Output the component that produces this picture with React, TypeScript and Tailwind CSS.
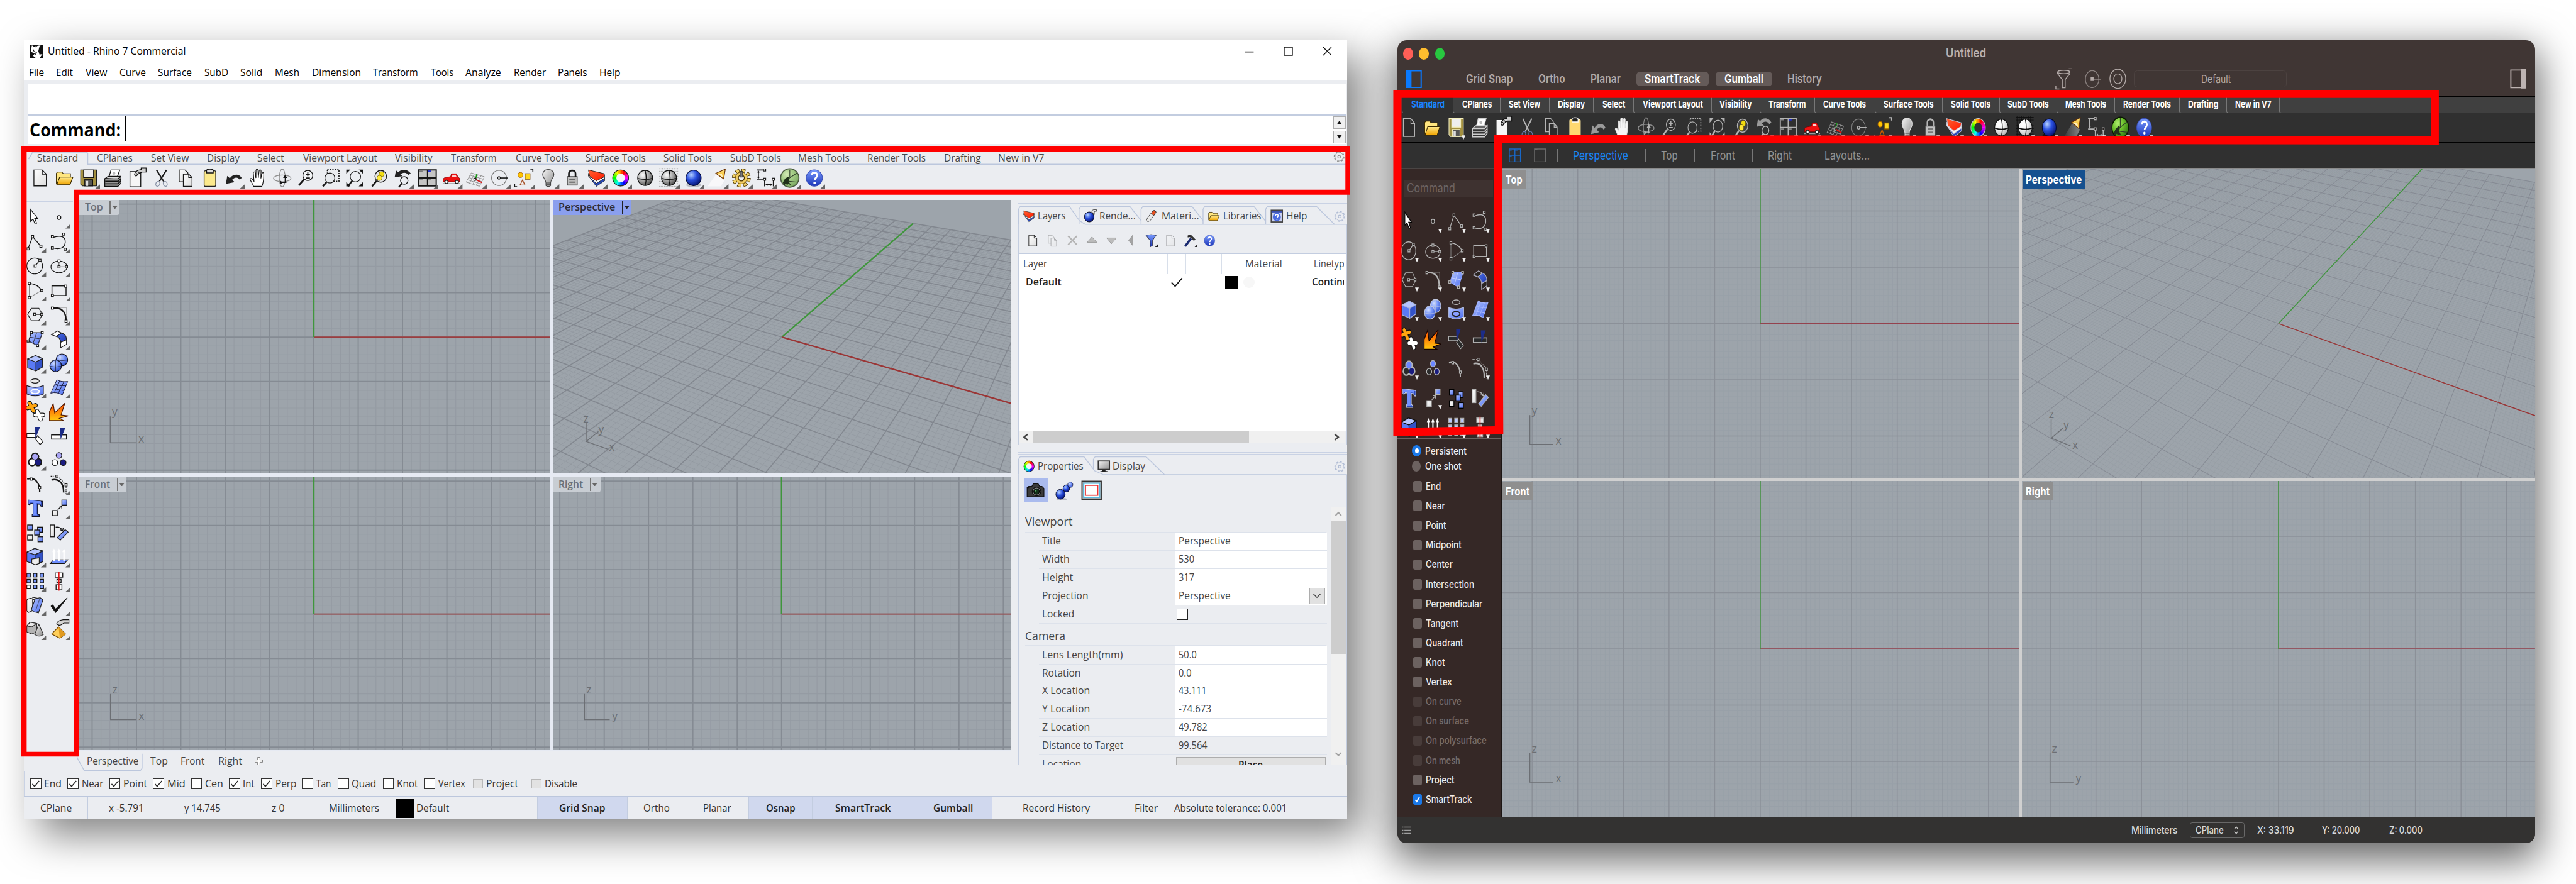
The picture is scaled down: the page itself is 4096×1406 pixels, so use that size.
import React, { useLayoutEffect, useRef, useState } from "react";

/* ---------- text that occupies an exact width ---------- */
function Fit({ w, children, className = "" }: { w: number; children: React.ReactNode; className?: string }) {
  const outer = useRef<HTMLSpanElement>(null);
  const inner = useRef<HTMLSpanElement>(null);
  const [s, setS] = useState(1);
  useLayoutEffect(() => {
    if (outer.current && inner.current) {
      setS(outer.current.getBoundingClientRect().width / inner.current.getBoundingClientRect().width);
    }
  }, []);
  return (
    <span ref={outer} className={"inline-block shrink-0 whitespace-nowrap text-left " + className} style={{ width: w }}>
      <span ref={inner} className="inline-block origin-left" style={{ transform: `scaleX(${s})` }}>
        {children}
      </span>
    </span>
  );
}

/* ---------- shared gradients ---------- */
function Defs() {
  const lin = (id: string, a: string, b: string, x2 = "1", y2 = "1") => (
    <linearGradient id={id} x1="0" y1="0" x2={x2} y2={y2}>
      <stop offset="0" stopColor={a} />
      <stop offset="1" stopColor={b} />
    </linearGradient>
  );
  const rad = (id: string, a: string, m: string, b: string) => (
    <radialGradient id={id} cx=".35" cy=".3" r=".75">
      <stop offset="0" stopColor={a} />
      <stop offset=".45" stopColor={m} />
      <stop offset="1" stopColor={b} />
    </radialGradient>
  );
  return (
    <svg width="0" height="0" className="absolute">
      <defs>
        {lin("gPaper", "#ffffff", "#dcdcdc")}
        {lin("gBlue", "#b4c6ff", "#4a6cf0")}
        {lin("gBlueD", "#4a6ee6", "#2038b0")}
        {lin("gGold", "#ffe98a", "#f0a400", "0")}
        {lin("gOrange", "#ff4a00", "#ffc810", "0")}
        {lin("gRed", "#ff6030", "#ff1800")}
        {lin("gGray", "#f4f4f4", "#8c8c8c")}
        {lin("gHelp", "#7a9cff", "#1a34b8", "0")}
        {lin("gBeam", "#3a3a3a", "#9a9a9a", "1", "0")}
        {rad("gBall", "#b8d4ff", "#2a50e0", "#04106a")}
        {rad("gSphere", "#ffffff", "#b8b8b8", "#4a4a4a")}
        {rad("gSphereW", "#ffffff", "#f2f2f2", "#b0b0b0")}
        {rad("gBlob", "#cfdcff", "#7a98fa", "#2f50c8")}
        {rad("gGreen", "#d6ecb8", "#a4cc86", "#7aa860")}
        {rad("gGreenD", "#b0f070", "#6cc02c", "#2f7a10")}
      </defs>
    </svg>
  );
}

/* ---------- icons, on a 24 unit grid ---------- */
type T = { k: string; p: string; d: boolean };
const LIGHT: T = { k: "#161616", p: "url(#gPaper)", d: false };
const DARK: T = { k: "#b4b4b4", p: "#2c2c2c", d: true };

const H = (x: number, y: number, t: T) => (
  <rect key={x + "-" + y} x={x - 1.3} y={y - 1.3} width="2.6" height="2.6" fill={t.d ? "#2a2422" : "#fff"} stroke={t.k} strokeWidth=".9" />
);
const wheel = (r: number, sw: number) =>
  Array.from({ length: 24 }, (_, i) => {
    const a = ((i * 15 - 98) * Math.PI) / 180;
    const b = (((i + 1) * 15 - 96) * Math.PI) / 180;
    return (
      <path
        key={i}
        d={`M${12 + r * Math.cos(a)} ${12 + r * Math.sin(a)}A${r} ${r} 0 0 1 ${12 + r * Math.cos(b)} ${12 + r * Math.sin(b)}`}
        stroke={`hsl(${360 - ((i * 15 + 330) % 360)} 100% 50%)`}
        strokeWidth={sw}
        fill="none"
      />
    );
  });
const box = (x: number, y: number, s: number, f: string, k: string) => (
  <rect key={x + "_" + y} x={x} y={y} width={s} height={s} fill={f} stroke={k} strokeWidth="1" />
);
const lens = (t: T) => (
  <>
    <circle cx="14" cy="9" r="6" fill={t.d ? "none" : "#f4f6f8"} stroke={t.k} />
    <path d="M9.6 13.6 3 21" stroke={t.k} strokeWidth="2" />
  </>
);

const ICONS: Record<string, (t: T) => React.ReactNode> = {
  page: (t) => <path d="M4.5 2.5h10l5 5v14h-15zM14.5 2.5v5h5" fill={t.p} stroke={t.k} />,
  open: () => (
    <g stroke="#3a2a00" strokeWidth=".9">
      <path d="M2 19V6.500l1.500-1.500h5l2 2h8.500v4" fill="#ffe680" />
      <path d="M2.500 20 6 11h16l-3.500 9z" fill="url(#gGold)" />
    </g>
  ),
  save: (t) => (
    <g stroke={t.d ? "#f4f0c0" : "#111"} strokeWidth=".9">
      <path d="M2.500 2.500h19v19H4.500l-2-2z" fill="#a39040" />
      <rect x="6" y="2.500" width="12" height="9" fill="#eeeeee" />
      <rect x="7" y="14" width="10" height="7.500" fill="#555" />
      <rect x="8.500" y="15.500" width="3" height="6" fill="#ddd" stroke="none" />
    </g>
  ),
  print: (t) => (
    <g stroke={t.d ? "#cfcfcf" : "#111"} strokeWidth="1">
      <path d="M7 11 9.500 2.500H20L17 11z" fill="#fff" />
      <circle cx="13" cy="6.500" r="1.800" fill="#bbb" stroke="none" />
      <path d="M2.500 12.500 6 10h15l-3 3.500z" fill={t.d ? "#666" : "#ddd"} />
      <path d="M2 13h16l3.500-3v8L18 22H2z" fill={t.d ? "#333" : "#999"} />
      <path d="M2.500 16H18l3.500-3M2.500 19H18l3.500-3.500" strokeWidth="1.300" fill="none" />
    </g>
  ),
  props: (t) => (
    <>
      <path d="M3.500 4.500h13v18h-13z" fill="#f6f6f6" stroke={t.d ? "#fff" : "#111"} />
      <path d="M9 7.500c1-3 4-5 8-5.500V0h6v5h-5c-2 1-5 1.500-6 4-1 1-3 1-3-1.500z" fill="#cfcfcf" stroke="#111" strokeWidth=".9" />
      <path d="M11 6l1.500 2M13.500 4.500 15 6.500" stroke="#111" strokeWidth=".8" />
    </>
  ),
  cut: (t) => (
    <>
      <path d="M6 2.500 14.500 16M18 2.500 9.500 16" stroke={t.k} strokeWidth="1.600" />
      <ellipse cx="7.500" cy="19" rx="2.300" ry="3" fill="none" stroke={t.d ? "#6878a8" : "#8a94a8"} transform="rotate(25 7.500 19)" />
      <ellipse cx="16.500" cy="19" rx="2.300" ry="3" fill="none" stroke={t.d ? "#6878a8" : "#8a94a8"} transform="rotate(-25 16.500 19)" />
    </>
  ),
  copy: (t) => (
    <g fill={t.p} stroke={t.k}>
      <path d="M4.500 2.500h7l3.500 3.500v10.500H4.500z" />
      <path d="M9.500 7.500h6.500l4 4v10.500H9.500zM16 7.500v4h4" />
    </g>
  ),
  paste: (t) => (
    <>
      <rect x="5" y="3.500" width="14" height="18.500" rx="1.500" fill={t.d ? "#ffd870" : "#fbe98c"} stroke={t.d ? "#ffe9a0" : "#222"} />
      <path d="M8 3c0-2 8-2 8 0v3H8z" fill={t.d ? "#222" : "#ddd"} stroke={t.d ? "#fff" : "#111"} strokeWidth="1" />
    </>
  ),
  undo: (t) => (
    <path d="M2.500 19 4 9.500l3.200 2.800C10.500 7.500 18 6 21.500 12l-2.500 2c-2.500-3.500-6.500-2.800-9 .3l3 2.700z" fill={t.d ? "#9a9a9a" : "#222"} />
  ),
  hand: (t) => (
    <path
      d="M7 22C6 19 3.500 16 2.800 13.500c.4-1.400 1.800-1.200 2.700.2L7.500 16 6.700 6c.1-1.600 2-1.600 2.300 0l.8 6L9.900 3c.2-1.700 2.200-1.700 2.400 0l.4 9L13.700 3.500c.3-1.600 2.200-1.500 2.300.1l-.2 8.900 1.400-6c.5-1.400 2.200-1 2.100.5C19.300 13 19 18 17 22z"
      fill={t.d ? "#f6f6f6" : "#fff"}
      stroke={t.d ? "#e0e0e0" : "#111"}
      strokeWidth=".9"
    />
  ),
  orbit: (t) => (
    <g fill="none" stroke="#8c8c8c">
      <ellipse cx="12" cy="12.500" rx="10.500" ry="4" />
      <ellipse cx="12" cy="12" rx="3.600" ry="10.500" />
      <path d="M12.500 17.500 9.500 15v5zM15.500 8l-2.500 4h5z" fill={t.k} stroke="none" />
      <path d="M15.500 11v6M11 17.500h6" stroke={t.k} />
    </g>
  ),
  zoomPm: (t) => (
    <>
      {lens(t)}
      <path d="M14 5v5M11.500 7.500h5M11.500 12h5" stroke={t.k} strokeWidth="1.300" />
    </>
  ),
  zoomWin: (t) => (
    <>
      <rect x="8" y="2" width="14" height="14" fill="none" stroke={t.k} strokeDasharray="1.500 1.500" strokeWidth="1.300" />
      <circle cx="11" cy="12" r="6" fill={t.d ? "#303030" : "#e6e9ed"} stroke={t.k} strokeWidth=".9" />
      <path d="M7 17 2.500 22" stroke={t.k} strokeWidth="2" />
    </>
  ),
  zoomExt: (t) => (
    <>
      <path d="M2 2h5L2 7zM22 2v5l-5-5zM2 22v-5l5 5zM22 22h-5l5-5z" fill={t.k} />
      <circle cx="13" cy="10.500" r="6.300" fill="none" stroke={t.k} strokeWidth=".9" />
      <path d="M9 15.500 4 22" stroke={t.k} strokeWidth="2" />
    </>
  ),
  zoomSel: (t) => (
    <>
      <circle cx="14" cy="10" r="7" fill={t.d ? "#444" : "#e6e6e6"} stroke={t.k} />
      <circle cx="15" cy="7.500" r="3" fill="#f2dc10" stroke="#6a5a00" strokeWidth=".6" />
      <circle cx="12.500" cy="12" r="3" fill="#ffe93a" stroke="#6a5a00" strokeWidth=".6" />
      <path d="M9 15.500 3.500 22" stroke={t.k} strokeWidth="2" />
    </>
  ),
  undoView: (t) => (
    <>
      <path d="M2 11 3.500 3l2.800 2c4-4 11-4 15 1.500l-2.500 2c-3-3.500-7-3.500-10-.800L11.500 10z" fill={t.d ? "#9a9a9a" : "#222"} />
      <circle cx="13.500" cy="15" r="4.500" fill="none" stroke={t.k} />
      <path d="M10.500 18.500 7 23" stroke={t.k} strokeWidth="1.800" />
    </>
  ),
  views4: (t) => (
    <>
      <path d="M1.500 2.500h21v19h-21zM1.500 12h21M12 2.500v19" fill={t.d ? "none" : "#c4c4c4"} stroke={t.k} strokeWidth="1.500" />
      <path d="M12.500 3.800h4" stroke="#2030d0" strokeWidth="1.500" />
      <path d="M2 3.800h4M2 13.500h4M12.500 13.500h4" stroke={t.d ? "#888" : "#777"} strokeWidth="1.200" />
    </>
  ),
  car: () => (
    <>
      <path d="M1.500 18.500h21" stroke="#999" strokeWidth=".7" />
      <path d="M2 16.500V13l2-1.500 7-1L12 7h6l2 4 2 1.500v4z" fill="#ee1111" stroke="#7a0000" strokeWidth=".6" />
      <path d="M13.200 8.200h3.800l1.200 2.500h-5.500z" fill="#ffd0d0" />
      <circle cx="6" cy="16.700" r="2" fill="#fff" stroke="#222" strokeWidth="1.200" />
      <circle cx="18.500" cy="16.700" r="2" fill="#fff" stroke="#222" strokeWidth="1.200" />
    </>
  ),
  cplane: (t) => (
    <>
      <path d="M7 6 23 10.500 17 22 1 17zM11 7 5 18.300M15 8.300 9 19.500M19 9.400 13 20.700M5.500 8.800 21.500 13.400M4 11.500 20 16.300M2.500 14.200 18.500 19" stroke="#8e8e8e" strokeWidth=".7" fill="none" />
      <path d="M12 13.500 14 7" stroke="#10a010" strokeWidth="1.200" />
      <path d="M12 13.500 20 17.500" stroke="#e01010" strokeWidth="1.400" />
      {H(11.5, 13.5, t)}
    </>
  ),
  osnap: (t) => (
    <>
      <circle cx="11" cy="12" r="9" fill="none" stroke={t.d ? "#7c7c7c" : "#777"} strokeWidth=".9" />
      <path d="M12 12h9.500" stroke={t.k} strokeWidth="1.200" />
      <circle cx="11" cy="12" r="1.500" fill={t.d ? "#333" : "#fff"} stroke={t.k} />
    </>
  ),
  select: (t) => (
    <>
      <path d="M20 1.500h3v3M4 22.500H1v-3" fill="none" stroke={t.k} strokeWidth="1.200" />
      <circle cx="8" cy="8.500" r="3" fill="#ffc400" stroke="#a86000" strokeWidth=".7" />
      <rect x="13.500" y="7" width="6" height="6.500" fill="#ffd820" stroke="#7a4a00" strokeWidth="1" />
      <path d="M10.500 14.500 13.500 20.500h-6z" fill={t.d ? "none" : "#f4f4f4"} stroke={t.d ? "#d06000" : "#a04a20"} />
    </>
  ),
  bulb: (t) => (
    <>
      <path d="M12 2C7 2 4.500 6 5.500 9.500 6.500 12.500 9 14 9.200 18v3c1 1.500 4.600 1.500 5.600 0v-3c.2-4 2.700-5.500 3.700-8.500C19.500 6 17 2 12 2z" fill="url(#gGray)" stroke={t.d ? "#ddd" : "#444"} strokeWidth=".9" />
      <path d="M9.500 18h5M9.500 20h5" stroke="#444" strokeWidth=".8" />
    </>
  ),
  lock: (t) => (
    <>
      <path d="M8 11V6.500c0-4.500 8-4.500 8 0V11" fill="none" stroke={t.k} strokeWidth="2" />
      <rect x="6" y="10.500" width="12" height="10" fill={t.d ? "#c0c0c0" : "#bdbdbd"} stroke={t.d ? "#888" : "#222"} />
      <path d="M8.500 13.500h7M8.500 17h7" stroke={t.d ? "#777" : "#666"} strokeWidth="1.400" />
    </>
  ),
  layers: (t) => (
    <g stroke={t.d ? "#c8c8d8" : "#222"} strokeWidth=".7">
      <path d="M2 9 11.500 22 21.500 15.500V12L11.500 17z" fill="#2848b8" />
      <path d="M2 6.500V10l9.500 8.500 10-6V9L11.500 14z" fill="#f4f4f4" />
      <path d="M2 2.500 21.500 7 20.500 11 11.500 15.500 3.500 10z" fill="url(#gRed)" />
    </g>
  ),
  wheel: (t) => (
    <>
      <circle cx="12" cy="12" r="9.800" fill={t.d ? "none" : "#222"} />
      <circle cx="12" cy="12" r="6" fill={t.d ? "#303030" : "#f4f4f8"} />
      {wheel(7.2, 4.2)}
      <circle cx="12" cy="12" r="9.600" fill="none" stroke={t.d ? "#ccc" : "#222"} strokeWidth=".8" />
    </>
  ),
  ball: (t) => (
    <>
      <ellipse cx="12" cy="12" rx="9" ry="9" fill={t.d ? "url(#gSphereW)" : "url(#gSphere)"} stroke="#111" />
      <path d="M3 12.500q9 2.500 18 0M12 3q2.500 9 0 18" fill="none" stroke="#111" strokeWidth="1.100" />
    </>
  ),
  ballGrid: (t) => (
    <>
      {[1, 4, 7, 10, 13, 16, 19, 22].map((v) => (
        <path key={v} d={`M${v} 0v23M0 ${v}h23`} stroke={t.d ? "#111" : "#a8a8a8"} strokeWidth=".7" strokeDasharray={t.d ? undefined : "1 1"} />
      ))}
      <circle cx="12" cy="12" r="9" fill={t.d ? "url(#gSphereW)" : "url(#gSphere)"} stroke="#111" />
      <path d="M3 12.500q9 2.500 18 0M12 3q2.500 9 0 18" fill="none" stroke="#111" strokeWidth="1.100" />
    </>
  ),
  blueBall: (t) => (
    <>
      <ellipse cx="12" cy="20.500" rx="9" ry="2.600" fill={t.d ? "#111" : "#b8bac2"} />
      <circle cx="12" cy="12" r="9.200" fill="url(#gBall)" stroke="#000830" strokeWidth=".8" />
    </>
  ),
  spot: (t) => (
    <>
      <path d="M11 7 0 22h16l5-8z" fill={t.d ? "url(#gBeam)" : "#f8f8fa"} opacity={t.d ? ".8" : "1"} />
      <path d="M10 6.500 21.500 1.500 19.500 13z" fill="url(#gGold)" stroke="#6a3000" strokeWidth=".9" />
      <path d="M10.500 7q5 1.500 8.500 5.500l-1.500-5z" fill="#fff0c0" />
    </>
  ),
  gear: () => (
    <>
      <circle cx="12" cy="12" r="9" fill="none" stroke="#4a3400" strokeWidth="4.600" strokeDasharray="4.500 2.560" />
      <circle cx="12" cy="12" r="9" fill="none" stroke="#f4d468" strokeWidth="3.200" strokeDasharray="3.300 3.760" strokeDashoffset="-.6" />
      <circle cx="12" cy="12" r="7" fill="#f0cc60" stroke="#6a4a00" strokeWidth=".6" />
      <circle cx="12" cy="12" r="3.600" fill="#eceef2" stroke="#4a3400" />
      <path d="M10.500 4h3v7h-3z" fill="#777" stroke="#222" strokeWidth=".6" />
    </>
  ),
  dims: (t) => (
    <g fill="none" stroke={t.k} strokeWidth="1.200">
      <path d="M1 2.500h10M1 13.500h9M3 4v8M2 5.500 3 4l1 1.500M2 10.500 3 12l1-1.500M10.500 14v8M21 14v8M12.500 20h6.500M14 19l-1.500 1L14 21M17.500 19l1.500 1-1.500 1" />
      {H(10.5, 2.5, t)}
      {H(10.5, 13.5, t)}
      {H(21, 13.5, t)}
    </g>
  ),
  grass: (t) => (
    <>
      <circle cx="12" cy="12" r="11" fill={t.d ? "url(#gGreenD)" : "url(#gGreen)"} stroke={t.d ? "#0a1a00" : "#4a5a40"} strokeWidth="1.300" />
      <path d="M3.500 17c2-1.500 2-5 5-5.500 1-1.500 3-1 3 .5l-1 4 3 5-3-2-2 1.500-1-2-2.500 2.500z" fill="#20301a" />
      <path d="M10 13 21 6M12 2v9M11 16l10 1" stroke="#30402a" strokeWidth=".9" fill="none" />
    </>
  ),
  help: () => (
    <>
      <circle cx="12" cy="12" r="9.800" fill="url(#gHelp)" stroke="#3a50b8" strokeWidth=".8" />
      <path d="M8.800 8.800c0-4.400 6.800-4.200 6.800 0 0 2.600-3.200 2.800-3.200 6" fill="none" stroke="#fff" strokeWidth="2.200" />
      <circle cx="12.300" cy="18" r="1.500" fill="#fff" />
    </>
  ),
  /* sidebar tools */
  arrow: (t) => (
    <path d="M6.500 2.500v15.500l3.300-3.200 3 6.700 2.200-1.200-2.800-6.200h4.300z" fill="#fff" stroke={t.d ? "#000" : "#111"} strokeWidth="1" transform="translate(1 0) scale(.86 .92)" />
  ),
  point: (t) => <circle cx="12" cy="12" r="2.200" fill={t.d ? "#2a2422" : "#f4f4f4"} stroke={t.k} strokeWidth="1.100" />,
  polyline: (t) => (
    <>
      <path d="M3.500 20 9 5.500 19 17" fill="none" stroke={t.k} />
      {[H(3.5, 20, t), H(9, 5.5, t), H(19, 17, t)]}
    </>
  ),
  curve: (t) => (
    <>
      <path d="M4.500 6.500C15 3 20 6 19.500 12.500S13 21 4.500 19" fill="none" stroke={t.k} strokeWidth="1.100" />
      {[H(4, 5.5, t), H(17.5, 2.5, t), H(4, 19, t), H(19.5, 20.5, t)]}
    </>
  ),
  circle: (t) => (
    <>
      <circle cx="11.500" cy="12" r="9.500" fill="none" stroke={t.k} strokeWidth=".9" />
      <path d="M12 12 18 5" stroke={t.k} />
      {[H(12, 12, t), H(17.8, 5.2, t)]}
    </>
  ),
  ellipse: (t) => (
    <>
      <ellipse cx="12" cy="13" rx="9.700" ry="7" fill="none" stroke={t.k} strokeWidth=".9" />
      <path d="M12 13V6M12 13h9" stroke={t.d ? "#888" : "#555"} strokeWidth=".8" />
      {[H(12, 13, t), H(12, 6, t), H(21, 13, t)]}
    </>
  ),
  arc: (t) => (
    <>
      <path d="M5 3.500C11 4 17 7 20 12" fill="none" stroke={t.k} strokeWidth="1.100" />
      <path d="M5 3.500V20.500L20 12" fill="none" stroke="#888" strokeWidth=".8" />
      {[H(5, 3.5, t), H(5, 20.5, t), H(20, 12, t)]}
    </>
  ),
  rect: (t) => (
    <>
      <rect x="3.500" y="6.500" width="17" height="11.500" fill="none" stroke={t.k} strokeWidth="1.100" />
      {[H(20, 6.8, t), H(4, 17.8, t)]}
    </>
  ),
  polygon: (t) => (
    <>
      <path d="M7.500 4h9l4.500 8-4.500 8h-9L3 12z" fill="none" stroke={t.k} strokeWidth=".9" transform="translate(0 1)scale(1 .92)" />
      <path d="M12 12h8" stroke={t.k} strokeWidth=".9" />
      {[H(11.5, 12, t), H(20, 12, t)]}
    </>
  ),
  fillet: (t) => (
    <>
      <path d="M4 4h17v16" fill="none" stroke="#999" strokeWidth=".6" />
      <path d="M4 4.500c10-1 16.500 3 16.500 15.500" fill="none" stroke={t.k} strokeWidth="1.800" />
      {[H(4, 4.5, t), H(20.5, 20, t)]}
    </>
  ),
  surface: (t) => (
    <>
      <path d="M7.500 4.500H21L15 20 4 14.500z" fill="url(#gBlue)" stroke={t.d ? "#8aa0ff" : "#223"} strokeWidth=".9" />
      <path d="M14 4.500 9.500 17.500M6 10l12 2" stroke={t.d ? "#c0ccff" : "#334"} strokeWidth=".8" />
      {[H(7.5, 4.5, t), H(20.5, 4.5, t), H(3.5, 14.5, t), H(15, 20, t)]}
    </>
  ),
  extrude: (t) => (
    <g stroke={t.d ? "#aab" : "#222"} strokeWidth=".9">
      <path d="M3 7 10 2.500 15 5 9 9z" fill={t.d ? "#2a2422" : "#fff"} />
      <path d="M9 9 15 5c4 1 6 4 6 8l-7 3c0-3-2-6-5-7z" fill="url(#gBlueD)" />
      <path d="M21 13v5.500L14 22.500V16z" fill={t.d ? "#2a2422" : "#fff"} />
    </g>
  ),
  cube: (t) => (
    <g stroke={t.d ? "#aab4d8" : "#222"} strokeWidth=".9">
      <path d="M3 7.500 12.500 3.500 21 7v10L13 21.500 3 18z" fill="#5a7af4" />
      <path d="M3 7.500 12.500 3.500 21 7 13 11z" fill="#b4c4ff" />
      <path d="M13 11v10.500L21 17V7z" fill="#3352c8" />
    </g>
  ),
  spheres: (t) => (
    <g stroke={t.d ? "#c0c8e0" : "#112"} strokeWidth=".9">
      <circle cx="15.500" cy="8.500" r="7" fill="url(#gBlob)" />
      <circle cx="8" cy="15.500" r="7" fill="url(#gBlob)" />
      <path d="M8.500 8.500q7 2 14 0M15.500 2v13M1 16q7 2 14 0M8 9v13" fill="none" strokeWidth=".5" />
    </g>
  ),
  cylinder: (t) => (
    <>
      <ellipse cx="12" cy="4.500" rx="5" ry="2.500" fill={t.d ? "none" : "#eee"} stroke={t.k} strokeWidth=".9" />
      <path d="M2 10q10 4 20 0v10q-10 4.500-20 0z" fill="url(#gBlue)" stroke={t.d ? "#aab4d8" : "#223"} strokeWidth=".9" />
      <ellipse cx="12" cy="17" rx="5" ry="2.600" fill={t.d ? "#8aa0ff" : "#a8bcff"} stroke={t.d ? "#222" : "#fff"} strokeWidth="1.500" />
    </>
  ),
  mesh: (t) => (
    <g stroke={t.d ? "#a8b8ff" : "#113"} strokeWidth=".7" fill="none">
      <path d="M9.500 3Q15 6 22.500 5L16 21Q9 17 2 19z" fill="url(#gBlue)" />
      <path d="M13 4 6.500 18M18 5 11 19.500M7 8q6 3 13.500 2M4.500 13.500q6 1 13.500 2.500" />
    </g>
  ),
  join: () => (
    <g fill="none" strokeLinecap="round">
      <path d="M3 8 12.500 5M5.500 2.500 10 11.500" stroke="#111" strokeWidth="5.400" />
      <path d="M3 8 12.500 5M5.500 2.500 10 11.500" stroke="#ffa510" strokeWidth="3.700" />
      <path d="M12 16.500 21.500 16.500M14.500 12 18.500 21.500" stroke="#111" strokeWidth="5.200" />
      <path d="M12 16.500 21.500 16.500M14.500 12 18.500 21.500" stroke="#fff" strokeWidth="3.600" />
    </g>
  ),
  explode: (t) => <path d="M.5 23V12.500L5 3 6.800 14 19 2.500 14.500 16.500 23 17.500 12.500 20.500 17 23z" fill="url(#gOrange)" stroke={t.d ? "#100" : "#501800"} strokeWidth=".9" />,
  trim: (t) => (
    <>
      <path d="M2 9.500h11v4.500H2zM15 12l6.500 7-3.500 3.500-5.500-6.500z" fill={t.d ? "#2a2a2a" : "#fff"} stroke={t.k} strokeWidth=".9" />
      <path d="M12 1.500h6L12.500 15z" fill="#1c2c88" />
    </>
  ),
  split: (t) => (
    <>
      <rect x="3" y="11" width="18" height="5" fill={t.d ? "#2a2a2a" : "#fff"} stroke={t.k} strokeWidth="1.100" />
      <path d="M13 3h6.500L14 16z" fill="#1c2c88" />
    </>
  ),
  group: (t) => (
    <>
      {[[12, 8.5], [8.5, 15], [15.5, 15]].map(([x, y]) => (
        <circle key={x} cx={x} cy={y} r="5" fill={t.k} />
      ))}
      <circle cx="8.500" cy="15" r="3.500" fill={t.d ? "#2a2a2a" : "#fff"} />
      <circle cx="15.500" cy="15" r="3.500" fill="#1a1c80" />
      <circle cx="12" cy="8.500" r="3.500" fill={t.d ? "#6a86ff" : "#a8a4f4"} />
    </>
  ),
  ungroup: (t) => (
    <g stroke={t.k} strokeWidth="1">
      <circle cx="12" cy="7" r="3.400" fill={t.d ? "#6a86ff" : "#a8a4f4"} />
      <circle cx="7" cy="15.500" r="3.400" fill={t.d ? "#2a2a2a" : "#fff"} />
      <circle cx="17" cy="15.500" r="3.400" fill="#1a1c80" />
    </g>
  ),
  ptsOn: (t) => (
    <>
      <path d="M2.500 6C11 3 18 10 17.500 21" fill="none" stroke={t.k} strokeWidth="1.700" />
      {[H(7.5, 6, t), H(17.5, 16, t)]}
    </>
  ),
  ctrlPts: (t) => (
    <>
      <path d="M2 2.500h8M12 4.500l8.500 8M20.500 15v8" stroke={t.k} strokeDasharray="1.200 1.200" fill="none" />
      <path d="M3 7C12 5 18 11 17.500 22" fill="none" stroke={t.k} strokeWidth="1.800" />
      {[H(9.5, 2.5, t), H(20.5, 13, t)]}
    </>
  ),
  text: (t) => (
    <>
      <path d="M4 2.500 21 4v6l-2-.2-1-2.300-3-.3V19l2 1v2H8.500v-2.500L10 19V6.700l-3-.200L5.500 8 4 7.500z" fill="#2a48b8" stroke={t.d ? "#c8d0e8" : "#112"} strokeWidth=".9" />
      <path d="M4 2.500 19 4v4.500l-1-2-4-.5v13l1 1.500H8.500L10 19V5.700L6.500 5.500 4 7.500z" fill="#7090ff" />
    </>
  ),
  move: (t) => (
    <>
      {box(15.5, 2.5, 6, "url(#gBlue)", t.k)}
      {box(4, 15, 6, "url(#gPaper)", t.k)}
      <path d="M10.500 14 15 10M12.500 9.500h2.800v3" fill="none" stroke={t.k} />
    </>
  ),
  copyObj: (t) => {
    const k = t.d ? "#000" : "#111";
    return (
      <>
        {box(3, 3, 6, "url(#gBlue)", k)}
        {box(3, 15, 6, "url(#gPaper)", k)}
        {box(15, 5.5, 6, "url(#gBlue)", k)}
        {box(11.5, 9, 6, "url(#gBlue)", k)}
        {box(15.5, 17, 6, "url(#gBlue)", k)}
      </>
    );
  },
  rotate: (t) => (
    <>
      <rect x="1.500" y="3" width="5" height="14" fill="url(#gPaper)" stroke={t.k} />
      <path d="M8 5.500q6-.5 8 4M13 8.500l3.500 1.500.5-3.500" fill="none" stroke={t.k} />
      <path d="M19.500 8.500 23 11.500 13.500 21 10 18z" fill="url(#gBlue)" stroke={t.k} strokeWidth=".9" />
    </>
  ),
  cubeEdit: (t) => (
    <g stroke={t.d ? "#111" : "#222"} strokeWidth=".9">
      <path d="M2 7 11.500 2.500 21.500 5.500V18L13 22 2 18z" fill="#5a7af4" />
      <path d="M2 7 11.500 2.500 21.500 5.500 12 10z" fill="#b4c4ff" />
      <path d="M12 10v12l9.500-4V5.500z" fill="#3352c8" />
      <path d="M8 15l9-1.500v7L12 22l-4-2z" fill="#eee" />
    </g>
  ),
  arrowsUp: (t) => (
    <>
      <path d="M5.500 16h17L18.500 20.500h-17z" fill="#7090ff" stroke={t.k} strokeWidth=".9" />
      <path d="M6 18V6M12 18V6M18 18V6" stroke="#fff" strokeWidth="1.700" />
      <path d="M4 7 6 2.500 8 7zM10 7l2-4.500L14 7zM16 7l2-4.500L20 7z" fill="#fff" />
    </>
  ),
  array: (t) => (
    <>
      {[0, 1, 2].map((r) =>
        [0, 1, 2].map((c) => box(2 + c * 8, 3 + r * 7, 4.2, r === 2 && c === 0 ? "#fff" : t.d ? "#b8c8ff" : "#7a98fa", t.d ? "#b0b0b0" : "#111"))
      )}
    </>
  ),
  align: (t) => (
    <>
      <g fill={t.d ? "#e8e8e8" : "#fff"} stroke={t.d ? "#aaa" : "#111"} strokeWidth="1">
        <rect x="7.500" y="2.500" width="9" height="5" />
        <rect x="9.500" y="10" width="5" height="4" />
        <rect x="8.500" y="16.500" width="7" height="6" />
      </g>
      <path d="M12 1v22.500" stroke="#e01818" strokeWidth="1.300" />
    </>
  ),
  bend: () => (
    <g stroke="#222" strokeWidth=".9">
      <path d="M2 6q4-3 7-1v14l-5 2-2-2z" fill="url(#gPaper)" />
      <path d="M9 3l5 1-4 2z" fill="#fff" />
      <path d="M12 5 18 3.500 21.500 6 16 21.500 10 20 7.500 17.500z" fill="url(#gBlue)" />
      <path d="M18 3.500 13 18l3 3.500" fill="none" strokeWidth=".5" />
    </g>
  ),
  check: () => <path d="M2.500 13.500 4.500 12 8 17 22 3.500 8 21z" fill="#111" stroke="#111" strokeWidth=".8" />,
  solids: () => (
    <g stroke="#333" strokeWidth=".9">
      <path d="M2 8 6 3.500 14 5v10L8 17.500 2 15z" fill="#b4b4b4" />
      <path d="M2 8 6 3.500 14 5 8 9z" fill="#e8e8e8" />
      <path d="M16.500 6 22 18q-5 4-10.500 0z" fill="url(#gGray)" />
    </g>
  ),
  pyramid: () => (
    <>
      <path d="M3 17.500 11.500 9 20 17.500 13 22.500z" fill="#ffcf5a" stroke="#6a4000" strokeWidth=".9" />
      <path d="M11.500 9 20 17.500 13 22.500z" fill="#e09a20" />
      <path d="M9 5.500c1-3 4-4.500 8-5h7v4h-6c-2 1-4 3-6 2.500z" fill="#d4d4d4" stroke="#111" strokeWidth=".9" />
    </>
  ),
  /* panel glyphs */
  del: () => <path d="M3 3 21 21M21 3 3 21" stroke="#b4b4b4" strokeWidth="3" />,
  up: () => <path d="M2 16 12 5 22 16z" fill="#bcbcbc" stroke="#8e8e8e" />,
  down: () => <path d="M2 7 12 19 22 7z" fill="#bcbcbc" stroke="#8e8e8e" />,
  left: () => <path d="M16 1 7 12 16 23z" fill="#a4a4a4" stroke="#8e8e8e" />,
  funnel: () => <path d="M2.500 2.500q9.500-2.500 19 0l-7 9.500v9l-4 2V12z" fill="url(#gHelp)" stroke="#223" />,
  hammer: () => (
    <>
      <path d="M3 22 14 8" stroke="#1a2a70" strokeWidth="4" />
      <path d="M8 3q6-2 9 2l5 5-3 2-5-5q-3-3-6-1z" fill="#333" stroke="#111" strokeWidth=".6" />
    </>
  ),
  monitor: () => (
    <>
      <rect x="1.500" y="2.500" width="21" height="15" fill="url(#gGray)" stroke="#333" strokeWidth="2" />
      <path d="M9 18h6v2.500h3.500v2h-13v-2H9z" fill="#222" />
    </>
  ),
  brush: () => (
    <>
      <path d="M5 14 14 3q5-3 6 2L11 18q-5 6-9 2z" fill="#e8e8e8" stroke="#333" />
      <path d="M11 7l5 4 4-6q-1-5-6-2z" fill="#e85020" stroke="#333" />
    </>
  ),
  render: () => (
    <>
      <circle cx="10.500" cy="13.500" r="9" fill="url(#gBall)" stroke="#001" />
      <path d="M13 5q2-4 6-4.500h5v3h-4v6h-2V6z" fill="#e8e8e8" stroke="#111" strokeWidth=".8" />
    </>
  ),
  helpDoc: () => (
    <>
      <rect x="1.500" y="1.500" width="21" height="21" fill="#c8d0f0" stroke="#444" strokeWidth="2" />
      <path d="M2 4h20" stroke="#3a50b0" strokeWidth="3" />
      <circle cx="12" cy="13.500" r="7.500" fill="#4a6ae0" />
      <path d="M9.500 11.500c0-3.500 5-3.300 5 0 0 2-2.300 2-2.300 4M12.200 17v1.800" fill="none" stroke="#fff" strokeWidth="1.900" />
    </>
  ),
  camera: () => (
    <>
      <path d="M1 8.500h2V7h4l2-3.500h6L17 7h3l2.500 2.500V20H1z" fill="#3a3a3a" stroke="#111" />
      <circle cx="13" cy="13.500" r="5.500" fill="#8a8a8a" stroke="#111" />
      <circle cx="13" cy="13.500" r="3.500" fill="#12301a" stroke="#000" />
      <circle cx="12" cy="12.500" r="1" fill="#5ab06a" />
    </>
  ),
  balls: () => (
    <>
      <ellipse cx="9" cy="22" rx="7" ry="1.500" fill="#b8bac2" />
      <circle cx="7.500" cy="16" r="6" fill="url(#gBall)" stroke="#001" strokeWidth=".6" />
      <circle cx="15" cy="9" r="4.300" fill="url(#gBall)" stroke="#001" strokeWidth=".6" />
      <circle cx="20" cy="4.500" r="3.300" fill="url(#gBlob)" stroke="#113" strokeWidth=".6" />
    </>
  ),
  frame: () => (
    <>
      <rect x="1" y="1" width="22" height="22" fill="#a8a8a8" stroke="#333" strokeWidth="1.200" />
      <rect x="3" y="3.500" width="18" height="17" fill="#f4ffff" stroke="#5ab8e0" strokeWidth="1.500" />
      <rect x="5" y="6" width="14" height="12" fill="#fff" stroke="#ee3030" strokeWidth="1.300" />
    </>
  ),
  cog: () => (
    <g fill="none" stroke="#b0bcd4">
      <circle cx="12" cy="12" r="8.500" strokeWidth="1" />
      <circle cx="12" cy="12" r="10" strokeWidth="2" strokeDasharray="4 3.850" />
      <circle cx="12" cy="12" r="2.800" strokeWidth="1.400" />
    </g>
  ),
  cogDark: () => (
    <g fill="none" stroke="#8a8a8a">
      <circle cx="12" cy="12" r="8.500" strokeWidth="1" />
      <circle cx="12" cy="12" r="10" strokeWidth="2" strokeDasharray="4 3.850" />
      <circle cx="12" cy="12" r="2.800" strokeWidth="1.400" />
    </g>
  ),
};

function Icon({ n, t = LIGHT, className }: { n: string; t?: T; className: string }) {
  return (
    <svg viewBox="0 0 24 24" preserveAspectRatio="none" className={"block shrink-0 overflow-visible " + className} fill="none">
      {ICONS[n](t)}
    </svg>
  );
}

/* ---------- viewports ---------- */
type Lab = { x: number; y: number; s: string };
type PlanProps = { w: number; h: number; cx: number; cy: number; sx: number; sy: number; n: number; mac?: boolean; gx: number; gy: number; gw: number; gh: number; labels: [string, string] };

function PlanView(p: PlanProps) {
  const minor = p.mac ? "#98a0a8" : "#959ba3";
  const major = p.mac ? "#8b9098" : "#858b93";
  const thin = p.mac ? 1.1 : 1.3;
  const thick = p.mac ? 1.6 : 2;
  const minors: React.ReactNode[] = [];
  const majors: React.ReactNode[] = [];
  const add = (vertical: boolean, c: number, size: number, step: number) => {
    for (let i = Math.ceil(-c / step); i <= Math.floor((size - c) / step); i++) {
      const v = c + i * step;
      const m = i % p.n === 0;
      (m ? majors : minors).push(
        <path key={(vertical ? "v" : "h") + i} d={vertical ? `M${v} 0V${p.h}` : `M0 ${v}H${p.w}`} stroke={m ? major : minor} strokeWidth={m ? thick : thin} />
      );
    }
  };
  add(true, p.cx, p.w, p.sx);
  add(false, p.cy, p.h, p.sy);
  return (
    <svg width={p.w} height={p.h} className="block bg-[#9da4ab]">
      {minors}
      {majors}
      <path d={`M${p.cx} ${p.cy}H${p.w}`} stroke={p.mac ? "#94424e" : "#9b3d3f"} strokeWidth={p.mac ? 1.5 : 2} />
      <path d={`M${p.cx} 0V${p.cy}`} stroke="#3f963c" strokeWidth={p.mac ? 1.5 : 2.5} />
      <path d={`M${p.gx} ${p.gy - p.gh}V${p.gy}H${p.gx + p.gw}`} fill="none" stroke="#6c6f74" strokeWidth="1.500" />
      <text x={p.gx + 3} y={p.gy - p.gh - 1} className="font-['Open_Sans'] text-[19px]" fill="#6c6f74">{p.labels[0]}</text>
      <text x={p.gx + p.gw + 4} y={p.gy} className="font-['Open_Sans'] text-[19px]" fill="#6c6f74">{p.labels[1]}</text>
    </svg>
  );
}

type PerspProps = { w: number; h: number; cx: number; cy: number; fx: number; fy: number; unit: number; ext: number; n: number; mac?: boolean; g: [number, number, number, number][]; labels: Lab[] };

function PerspView(p: PerspProps) {
  const D = 99.564;
  const proj = (u: number, v: number): [number, number, number] => {
    const x = u * p.unit;
    const y = v * p.unit;
    const dep = D - 0.433 * x + 0.75 * y;
    return [p.cx + ((0.86603 * x + 0.5 * y) * p.fx) / dep, p.cy - ((-0.25 * x + 0.433 * y) * p.fy) / dep, dep];
  };
  const seg = (x0: number, y0: number, x1: number, y1: number) => {
    const near = 6;
    let a = proj(x0, y0);
    let b = proj(x1, y1);
    if (a[2] < near && b[2] < near) return "";
    if (a[2] < near) {
      const t = (near - a[2]) / (b[2] - a[2]);
      a = proj(x0 + (x1 - x0) * t, y0 + (y1 - y0) * t);
    } else if (b[2] < near) {
      const t = (near - b[2]) / (a[2] - b[2]);
      b = proj(x1 + (x0 - x1) * t, y1 + (y0 - y1) * t);
    }
    return `M${a[0].toFixed(1)} ${a[1].toFixed(1)}L${b[0].toFixed(1)} ${b[1].toFixed(1)}`;
  };
  let minor = "";
  let major = "";
  for (let i = -p.ext; i <= p.ext; i++) {
    const s = seg(i, -p.ext, i, p.ext) + seg(-p.ext, i, p.ext, i);
    if (i % p.n === 0) major += s;
    else minor += s;
  }
  return (
    <svg width={p.w} height={p.h} className="block bg-[#9da4ab]" fill="none">
      <path d={minor} stroke="#8d939b" strokeWidth={p.mac ? 0.7 : 0.9} opacity={p.mac ? 0.4 : 0.6} />
      <path d={major} stroke={p.mac ? "#868b94" : "#82878f"} strokeWidth={p.mac ? 1.2 : 1.7} />
      <path d={seg(0, 0, 0, p.ext)} stroke="#3f963c" strokeWidth={p.mac ? 1.6 : 2.5} />
      <path d={seg(0, 0, p.ext, 0)} stroke="#9b3535" strokeWidth={p.mac ? 1.6 : 2.5} />
      {p.g.map(([a, b, c, d], i) => (
        <path key={i} d={`M${a} ${b}L${c} ${d}`} stroke="#6c6f74" strokeWidth="1.500" />
      ))}
      {p.labels.map((l) => (
        <text key={l.s} x={l.x} y={l.y} className="font-['Open_Sans'] text-[19px]" fill="#6c6f74">{l.s}</text>
      ))}
    </svg>
  );
}

/* ---------- Windows version ---------- */
const WMENU: [string, number][] = [["File", 26], ["Edit", 29], ["View", 37], ["Curve", 45], ["Surface", 58], ["SubD", 41], ["Solid", 38], ["Mesh", 42], ["Dimension", 84], ["Transform", 77], ["Tools", 39], ["Analyze", 61], ["Render", 55], ["Panels", 50], ["Help", 36]];
/* label, text width, slot width */
const WTABS: [string, number, number][] = [["Standard", 70, 102.3], ["CPlanes", 61, 93], ["Set View", 65, 95.1], ["Display", 56, 86.6], ["Select", 46, 78.5], ["Viewport Layout", 127, 156.5], ["Visibility", 64, 96], ["Transform", 78, 110.5], ["Curve Tools", 90, 119.5], ["Surface Tools", 103, 133], ["Solid Tools", 83, 113.6], ["SubD Tools", 87, 116.4], ["Mesh Tools", 88, 118], ["Render Tools", 100, 132], ["Drafting", 63, 92], ["New in V7", 79, 79]];
const BAR = ["page", "open", "save*", "print", "props", "cut", "copy", "paste", "undo*", "hand", "orbit", "zoomPm", "zoomWin", "zoomExt", "zoomSel", "undoView*", "views4*", "car*", "cplane*", "osnap*", "select*", "bulb*", "lock*", "layers*", "wheel*", "ball", "ballGrid*", "blueBall*", "spot*", "gear*", "dims*", "grass*", "help*"];
const SIDE = ["arrow", "point*", "polyline*", "curve*", "circle*", "ellipse*", "arc*", "rect*", "polygon*", "fillet*", "surface*", "extrude*", "cube*", "spheres*", "cylinder*", "mesh*", "join", "explode", "trim", "split", "group*", "ungroup", "ptsOn", "ctrlPts*", "text", "move*", "copyObj", "rotate", "cubeEdit*", "arrowsUp*", "array*", "align*", "bend*", "check*", "solids*", "pyramid*"];

function WTool({ name }: { name: string }) {
  const fly = name.endsWith("*");
  return (
    <div className="relative flex h-[41.4px] w-[41.35px] shrink-0 items-center justify-center">
      <Icon n={name.replace("*", "")} className="h-[34.5px] w-[34px]" />
      {fly && (
        <svg viewBox="0 0 9 8" className="absolute bottom-[1.800px] right-[1.500px] h-[8px] w-[9px]">
          <path d="M9 0v8H0z" fill="#666" />
        </svg>
      )}
    </div>
  );
}

function VLabel({ text, w, tw, active }: { text: string; w: number; tw: number; active?: boolean }) {
  return (
    <div
      className={"absolute left-0 top-0 flex h-[26px] items-center rounded-br-[4px] pl-[10px] font-semibold " + (active ? "bg-[#8a9fee] text-[#2c2c38]" : "bg-[#c8cdd3] text-[#6b7078]")}
      style={{ width: w }}
    >
      <Fit w={tw}>{text}</Fit>
      <span className={"ml-[11.500px] h-[22px] w-[1.500px] " + (active ? "bg-[#222]" : "bg-[#777]")} />
      <svg viewBox="0 0 10 6" className="ml-[2px] h-[6px] w-[10px]">
        <path d="M0 0h10L5 6z" fill={active ? "#222" : "#666"} />
      </svg>
    </div>
  );
}

function CB({ on, dim }: { on?: boolean; dim?: boolean }) {
  return dim ? (
    <span className="h-[17px] w-[17px] shrink-0 border-[1.500px] border-[#b8b8b8] bg-[#e2e2e2]" />
  ) : (
    <span className="h-[19px] w-[19px] shrink-0 border-[1.500px] border-[#333] bg-white">
      {on && (
        <svg viewBox="0 0 16 16" className="block h-full w-full">
          <path d="M2.500 8 6 12 13.500 3" fill="none" stroke="#222" strokeWidth="1.500" />
        </svg>
      )}
    </span>
  );
}

const OSNAPS: [string, number, number, string][] = [["End", 30, 10, "on"], ["Near", 37, 10, "on"], ["Point", 41, 10, "on"], ["Mid", 31, 10, "on"], ["Cen", 31, 10, ""], ["Int", 20, 11, "on"], ["Perp", 36, 10, "on"], ["Tan", 25, 12, ""], ["Quad", 42, 11, ""], ["Knot", 36, 10.6, ""], ["Vertex", 46, 14, ""], ["Project", 55, 23, "dim"], ["Disable", 56, 0, "dim"]];
const STATUS: [string, number, number, string][] = [["CPlane", 110, 54, ""], ["x -5.791", 130, 60, ""], ["y 14.745", 130, 62, ""], ["z 0", 130, 22, ""], ["Millimeters", 130, 86, ""], ["Default", 248, 56, "sw"], ["Grid Snap", 154, 79, "b"], ["Ortho", 100, 45, ""], ["Planar", 107, 48, ""], ["Osnap", 109, 50, "b"], ["SmartTrack", 173.5, 95, "b"], ["Gumball", 133.5, 68, "b"], ["Record History", 220.5, 115, ""], ["Filter", 87, 40, ""], ["Absolute tolerance: 0.001", 260, 193, "l"]];

function PanelTabs({ tabs, outline }: { tabs: [string, string, number, number, number][]; outline: string }) {
  return (
    <div className="relative flex h-[31px] items-center pt-[4px]">
      <svg width="563" height="31" className="absolute left-0 top-0 overflow-visible">
        <path d={outline} fill="none" stroke="#bcc7dd" strokeWidth="1.500" />
      </svg>
      {tabs.map(([n, s, w, tw, g]) => (
        <div key={s} className="relative flex items-center pl-[7px]" style={{ width: w }}>
          <Icon n={n} className="h-[23px] w-[22px]" />
          <span style={{ width: g }} />
          <Fit w={tw} className="text-[#444]">{s}</Fit>
        </div>
      ))}
      <Icon n="cog" className="absolute right-[2px] top-[8px] h-[20px] w-[20px]" />
    </div>
  );
}

function PropRow({ k, kw, v, vw, kind }: { k: string; kw: number; v?: string; vw?: number; kind?: string }) {
  return (
    <div className="ml-[34px] flex h-[31.080px] w-[492px] shrink-0 items-stretch border-b-[1.500px] border-[#dde2eb] pl-[6px]">
      <div className="flex w-[226px] items-center">
        <Fit w={kw}>{k}</Fit>
      </div>
      <div className={"flex flex-1 items-center justify-between border-l-[1.500px] border-[#dde2eb] pl-[6px] " + (kind === "plain" || kind === "check" ? "" : "bg-white")}>
        {v && <Fit w={vw!}>{v}</Fit>}
        {kind === "check" && <span className="-ml-[3.500px] h-[19px] w-[19px] border-[1.500px] border-[#222] bg-white" />}
        {kind === "drop" && (
          <span className="mr-[3px] flex h-[27px] w-[27px] items-center justify-center border-[1.500px] border-[#adadad] bg-[#e1e1e1]">
            <svg viewBox="0 0 12 7" className="h-[8px] w-[13px]"><path d="M.5.5 6 6 11.500.5" fill="none" stroke="#444" strokeWidth="1.400" /></svg>
          </span>
        )}
      </div>
    </div>
  );
}

function WinPanels() {
  const cell = "h-full shrink-0 border-r-[1.500px] border-[#d8dfea]";
  return (
    <div className="flex w-[574.500px] shrink-0 flex-col pl-[12px] pr-[1px]">
      <div className="mt-[2px] h-[4.500px] border-y-[1.500px] border-[#c9d2e4]" />
      <div className="mt-[4.500px]">
        <PanelTabs
          outline="M.5 31V5l3-4.500h84l17 24 10 6.500M104 31V5l3-4.500h84l19 24M210 31V5l3-4.500h84l19 24M316 31V5l3-4.500h84l19 24M423 31V5l3-4.500h84l31 31M114 31H562"
          tabs={[["layers", "Layers", 104.5, 48, 4.5], ["render", "Rende...", 106, 62, 5], ["brush", "Materi...", 106, 64, 5], ["open", "Libraries", 107, 65, 5], ["helpDoc", "Help", 100, 36, 5]]}
        />
      </div>
      <div className="flex h-[378px] flex-col border-x-[1.500px] border-b-[1.500px] border-[#c3cde0]">
        <div className="flex h-[49.500px] shrink-0 items-center pt-[6px] text-black">
          {["page", "copy", "del", "up", "down", "left", "funnel", "page", "hammer", "help"].map((n, i) => (
            <div key={i} className="relative flex w-[33.600px] shrink-0 items-center justify-center first:ml-[7px]">
              <span className={i === 1 || i === 7 ? "opacity-35" : ""}><Icon n={n} className={i > 1 && i < 6 ? "h-[20px] w-[20px]" : "h-[23px] w-[22px]"} /></span>
              {(i === 6 || i === 8) && <svg viewBox="0 0 5 5" className="absolute bottom-0 right-[4px] h-[6px] w-[6px]"><path d="M5 0v5H0z" fill="#222" /></svg>}
            </div>
          ))}
        </div>
        <div className="flex h-[303px] shrink-0 flex-col overflow-hidden border-t-[1.500px] border-[#c3cde0] bg-white">
          <div className="flex h-[35px] shrink-0 items-center text-[#444]">
            <div className={cell + " flex w-[254.500px] items-center pl-[7px]"}><Fit w={41}>Layer</Fit></div>
            {[0, 1, 2, 3].map((i) => <div key={i} className={cell + " w-[31px]"} />)}
            <div className={cell + " flex w-[118px] items-center pl-[8px]"}><Fit w={63}>Material</Fit></div>
            <div className="flex w-[59px] items-center overflow-hidden pl-[8px]"><Fit w={61} className="py-[6px]">Linetype</Fit></div>
          </div>
          <div className="flex h-[28px] shrink-0 items-center overflow-hidden border-b border-[#eceff4] font-semibold text-[#222]">
            <div className="w-[254.500px] pl-[12px]"><Fit w={61}>Default</Fit></div>
            <div className="flex w-[31px] justify-center">
              <svg viewBox="0 0 20 16" className="h-[17px] w-[20px]"><path d="M1 8.500 7 15 19 1" fill="none" stroke="#111" strokeWidth="2" /></svg>
            </div>
            <div className="ml-[67px] h-[21px] w-[21px] bg-black" />
            <div className="ml-[10px] h-[19px] w-[19px] rounded-full bg-[#f7f7f7]" />
            <div className="ml-[98px] w-[55px] overflow-hidden"><Fit w={91} className="py-[4px]">Continuous</Fit></div>
          </div>
        </div>
        <div className="flex h-[22px] w-[557px] items-center bg-[#f0f0f0]">
          <svg viewBox="0 0 24 22" className="h-[22px] w-[24px]"><path d="M15 6 9 11l6 5" fill="none" stroke="#444" strokeWidth="2.600" /></svg>
          <div className="h-full w-[369px] bg-[#cdcdcd]" />
          <svg viewBox="0 0 24 22" className="ml-[138px] h-[22px] w-[24px]"><path d="M9 6l6 5-6 5" fill="none" stroke="#444" strokeWidth="2.600" /></svg>
        </div>
      </div>
      <div className="mt-[4px] h-[1.500px] shrink-0 bg-[#d5dcea]" />
      <div className="mt-[6px] h-[4.500px] shrink-0 border-y-[1.500px] border-[#c9d2e4]" />
      <div className="mt-[3px]">
        <PanelTabs
          outline="M.5 31V5l3-4.500h109l18 24 14 6M128.500 22V5l3-4.500h87l32 31M144 31H562"
          tabs={[["wheel", "Properties", 128.5, 78, 4.5], ["monitor", "Display", 110, 56, 4]]}
        />
      </div>
      <div className="relative flex h-[497px] shrink-0 flex-col overflow-hidden border-x-[1.500px] border-b-[1.500px] border-[#c3cde0] text-[#444]">
        <div className="flex h-[55px] shrink-0 items-start pl-[8px] pt-[7px]">
          <div className="flex h-[41px] w-[41px] items-center justify-center bg-[#aabbee]"><Icon n="camera" className="h-[32px] w-[32px]" /></div>
          <Icon n="balls" className="ml-[12px] mt-[4px] h-[34px] w-[32px]" />
          <Icon n="frame" className="ml-[13px] mt-[3px] h-[34px] w-[36px]" />
        </div>
        <div className="flex h-[43px] shrink-0 items-center pl-[11px] pt-[8px] text-[20px]"><Fit w={81}>Viewport</Fit></div>
        <div className="ml-[11px] h-[1.500px] w-[515px] shrink-0 bg-[#dde2eb]" />
        <PropRow k="Title" kw={32} v="Perspective" vw={89} />
        <PropRow k="Width" kw={47} v="530" vw={27} />
        <PropRow k="Height" kw={53} v="317" vw={27} />
        <PropRow k="Projection" kw={79} v="Perspective" vw={89} kind="drop" />
        <PropRow k="Locked" kw={55} kind="check" />
        <div className="flex h-[37px] shrink-0 items-center pl-[11px] pt-[4px] text-[20px]"><Fit w={69}>Camera</Fit></div>
        <div className="ml-[11px] h-[1.500px] w-[515px] shrink-0 bg-[#dde2eb]" />
        <PropRow k="Lens Length(mm)" kw={138} v="50.0" vw={31} />
        <PropRow k="Rotation" kw={66} v="0.0" vw={22} />
        <PropRow k="X Location" kw={82} v="43.111" vw={48} />
        <PropRow k="Y Location" kw={82} v="-74.673" vw={56} />
        <PropRow k="Z Location" kw={82} v="49.782" vw={49} />
        <PropRow k="Distance to Target" kw={139} v="99.564" vw={49} kind="plain" />
        <div className="ml-[40px] flex h-[31px] shrink-0 items-center">
          <div className="w-[229px]"><Fit w={67}>Location</Fit></div>
          <div className="mt-[4px] flex h-[29px] w-[255px] items-center justify-center border-[1.500px] border-[#adadad] bg-[#e1e1e1] font-semibold text-[#222]"><Fit w={42}>Place</Fit></div>
        </div>
        <div className="absolute right-[1px] top-[55px] flex h-[441px] w-[24px] flex-col items-center bg-[#f0f0f0]">
          <svg viewBox="0 0 24 24" className="h-[24px] w-[24px] shrink-0"><path d="M7 15l5-5 5 5" fill="none" stroke="#a0a0a0" strokeWidth="2.200" /></svg>
          <div className="h-[228px] w-full shrink-0 bg-[#cdcdcd]" />
          <svg viewBox="0 0 24 24" className="mt-auto h-[36px] w-[24px] shrink-0"><path d="M7 9l5 5 5-5" fill="none" stroke="#a0a0a0" strokeWidth="2.200" /></svg>
        </div>
      </div>
    </div>
  );
}

function WinApp() {
  return (
    <div className="relative mt-[67.500px] flex h-[1333.500px] w-[2262px] shrink-0 flex-col bg-[#ebedf1] font-['Open_Sans',sans-serif] text-[17px] leading-none text-[#333] shadow-[26px_28px_66px_rgba(0,0,0,0.5)]">
      <div className="flex h-[40px] shrink-0 items-center bg-white pl-[9px] pt-[1px] text-black">
        <svg viewBox="0 0 24 24" className="h-[24px] w-[24px]">
          <path d="M0 0h24v24H0z" fill="#111" />
          <path d="M4 1 2 12l7 3-3 4 5 4h6l5-7-5 1-2-6 2-8 2-2-5 1-5 3 3-3-4 2z" fill="#fff" />
          <path d="M6 8l2 4 4 1-2 4" fill="none" stroke="#111" strokeWidth="1.200" />
        </svg>
        <Fit w={236} className="ml-[8px]">Untitled - Rhino 7 Commercial</Fit>
        <svg viewBox="0 0 16 24" className="ml-auto h-[24px] w-[16px]"><path d="M.5 12.500h15" stroke="#111" strokeWidth="1.700" /></svg>
        <svg viewBox="0 0 16 16" className="ml-[51px] h-[16px] w-[16px]"><path d="M1 1h14v14H1z" fill="none" stroke="#111" strokeWidth="1.600" /></svg>
        <svg viewBox="0 0 16 16" className="ml-[51px] mr-[26px] h-[16px] w-[16px]"><path d="M1 1l14 14M15 1 1 15" stroke="#111" strokeWidth="1.600" /></svg>
      </div>
      <div className="flex h-[29.500px] shrink-0 items-center gap-[21px] bg-white pl-[8px] pt-[5.500px] text-black">
        {WMENU.map(([s, w]) => <Fit key={s} w={w}>{s}</Fit>)}
      </div>
      <div className="ml-[7.500px] mr-[3px] mt-[7px] h-[51px] shrink-0 bg-white" />
      <div className="ml-[7.500px] mr-[3px] mt-[.5px] h-[2px] shrink-0 bg-[#c3cde0]" />
      <div className="ml-[7.500px] mr-[3px] mt-[.5px] flex h-[48.500px] shrink-0 items-center bg-white pl-[2.500px] text-[30px] font-bold text-black">
        <Fit w={156}>Command:</Fit>
        <span className="ml-[7px] h-[44px] w-[2px] self-start bg-black" />
        <div className="ml-auto flex flex-col gap-[3px]">
          {["M0 6 4 0l4 6z", "M0 0h8L4 6z"].map((d) => (
            <span key={d} className="flex h-[21.500px] w-[21px] items-center justify-center border-[1.500px] border-[#adadad] bg-[#f0f0f0]">
              <svg viewBox="0 0 8 6" className="h-[6px] w-[8px]"><path d={d} fill="#111" /></svg>
            </span>
          ))}
        </div>
      </div>
      <div className="relative mt-[12px] flex h-[23.500px] shrink-0 items-center pl-[22px] pt-[1.500px] text-[#4a4a4a]">
        <svg width="2260" height="24" className="absolute left-0 top-0"><path d="M8 14 15 2h92l2 2v19H2260" fill="none" stroke="#bcc7dd" strokeWidth="1.800" /></svg>
        {WTABS.map(([s, w, slot]) => (
          <div key={s} className="relative shrink-0" style={{ width: slot }}>
            <Fit w={w}>{s}</Fit>
          </div>
        ))}
        <Icon n="cogDark" className="absolute right-[4px] top-0 h-[20px] w-[20px]" />
      </div>
      <div className="flex h-[45px] shrink-0 items-center pl-[7.300px]">
        {BAR.map((n) => <WTool key={n} name={n} />)}
      </div>
      <div className="mt-[14.500px] flex h-[1019.500px] shrink-0">
        <div className="flex w-[1687.500px] shrink-0 flex-col">
          <div className="flex h-[942px] shrink-0">
            <div className="w-[94px] shrink-0">
              <div className="mt-[3px] h-[4.500px] w-[84px] border-y-[1.500px] border-[#c9d2e4]" />
              <div className="-ml-[1.800px] mt-[2.500px] grid w-[83px] grid-cols-[41.400px_41.400px]">
                {SIDE.map((n) => <WTool key={n} name={n} />)}
              </div>
            </div>
            <div className="grid grid-cols-[804.700px_783px] grid-rows-[467.500px_467.500px] gap-x-[4.800px] gap-y-[6.500px] bg-[#e6eaf3]">
              <div className="relative overflow-hidden">
                <PlanView w={805} h={468} cx={401} cy={234.5} sx={15.16} sy={15.16} n={5} gx={53} gy={415} gw={44} gh={45} labels={["y", "x"]} />
                <VLabel text="Top" w={69} tw={31} />
              </div>
              <div className="relative overflow-hidden">
                <PerspView w={783} h={468} cx={391.5} cy={234.5} fx={975} fy={975} unit={1} ext={70} n={5} g={[[57, 381, 57, 413], [57, 413, 94, 426], [57, 413, 78, 396]]} labels={[{ x: 52, y: 380, s: "z" }, { x: 78, y: 399, s: "y" }, { x: 96, y: 429, s: "x" }]} />
                <VLabel text="Perspective" w={134.5} tw={97} active />
              </div>
              <div className="relative overflow-hidden">
                <PlanView w={805} h={468} cx={401} cy={234} sx={15.16} sy={15.16} n={5} gx={53.4} gy={414.5} gw={44} gh={44} labels={["z", "x"]} />
                <VLabel text="Front" w={81} tw={43} />
              </div>
              <div className="relative overflow-hidden">
                <PlanView w={783} h={468} cx={391} cy={234} sx={15.16} sy={15.16} n={5} gx={54.2} gy={414.5} gw={43} gh={44} labels={["z", "y"]} />
                <VLabel text="Right" w={82} tw={42} />
              </div>
            </div>
          </div>
          <div className="relative flex h-[36px] shrink-0 items-center pl-[107px] text-[#444]">
            <svg width="260" height="38" className="absolute left-0 top-0"><path d="M91 0v12l12 22h96l3-4V5" fill="none" stroke="#bcc7dd" strokeWidth="1.500" /></svg>
            <Fit w={88.6} className="relative">Perspective</Fit>
            <Fit w={30} className="ml-[20.400px]">Top</Fit>
            <Fit w={41} className="ml-[21.600px]">Front</Fit>
            <Fit w={41} className="ml-[23px]">Right</Fit>
            <svg viewBox="0 0 14 14" className="ml-[22px] h-[14px] w-[14px]"><path d="M5 .5h4V5h4.500v4H9v4.500H5V9H.5V5H5z" fill="#fff" stroke="#777" /></svg>
          </div>
          <div className="flex h-[41px] items-center border-l-[1.500px] border-[#c9d2e4] pl-[9.500px]">
            {OSNAPS.map(([s, w, g, st]) => (
              <React.Fragment key={s}>
                <CB on={st === "on"} dim={st === "dim"} />
                <Fit w={w} className="ml-[5px]">{s}</Fit>
                <span className="shrink-0" style={{ width: g }} />
              </React.Fragment>
            ))}
          </div>
        </div>
        <WinPanels />
      </div>
      <div className="flex flex-1 items-stretch border-t-[1.500px] border-[#bcc7dd]">
        {STATUS.map(([s, w, tw, k]) => (
          <div
            key={s}
            className={"flex shrink-0 items-center border-r-[1.500px] border-[#c3cde0] pt-[1.500px] " + (k === "b" ? "justify-center bg-[#d0d8ee] font-semibold text-[#222]" : k === "sw" ? "pl-[5px]" : k === "l" ? "pl-[3px]" : "justify-center")}
            style={{ width: w }}
          >
            {k === "sw" && <span className="mr-[4px] h-[33px] w-[32px] bg-black" />}
            <Fit w={tw}>{s}</Fit>
          </div>
        ))}
      </div>
      <svg width="2280" height="1060" className="absolute -left-[4px] top-[182.500px]">
        <path fillRule="evenodd" fill="#ff0000" d="M0 0H2271V82.500H98V1043H0zM9 8.700V1035H89.500V74H2263V8.700z" />
      </svg>
    </div>
  );
}

/* ---------- Mac version ---------- */
/* label, text width, tab width */
const MTABS: [string, number, number][] = [["Standard", 57, 87.1], ["CPlanes", 51, 80.4], ["Set View", 54, 83.5], ["Display", 46.5, 75.5], ["Select", 39, 69], ["Viewport Layout", 103, 132.6], ["Visibility", 55.5, 83.4], ["Transform", 64, 93], ["Curve Tools", 73, 103], ["Surface Tools", 85.5, 115.6], ["Solid Tools", 68, 97.4], ["SubD Tools", 70.6, 98.6], ["Mesh Tools", 70, 98.4], ["Render Tools", 81.5, 111], ["Drafting", 52, 80.8], ["New in V7", 62, 90.2]];

function MTool({ name, tall }: { name: string; tall?: boolean }) {
  return (
    <div className={"relative flex w-[40.560px] shrink-0 items-center justify-center " + (tall ? "h-[50.300px]" : "h-[51px]")}>
      <Icon n={name.replace("*", "")} t={DARK} className="h-[38.500px] w-[31px]" />
      {name.endsWith("*") && (
        <svg viewBox="0 0 7 8" className={"absolute right-[4px] h-[8px] w-[6.500px] " + (tall ? "bottom-[4.500px]" : "bottom-[5px]")}><path d="M0 0h7L3.500 8z" fill="#f0f0f0" /></svg>
      )}
    </div>
  );
}

function MLabel({ text, w, tw, active }: { text: string; w: number; tw: number; active?: boolean }) {
  return (
    <div className={"absolute left-[.5px] top-[2.500px] flex h-[31.500px] items-center justify-center text-[19px] font-bold text-white " + (active ? "bg-[#15508f]" : "bg-[#8f8f8f]")} style={{ width: w }}>
      <Fit w={tw}>{text}</Fit>
    </div>
  );
}

const MSNAPS: [string, number, string][] = [["End", 26, ""], ["Near", 33, ""], ["Point", 35, ""], ["Midpoint", 61, ""], ["Center", 46, ""], ["Intersection", 83, ""], ["Perpendicular", 97, ""], ["Tangent", 56, ""], ["Quadrant", 64, ""], ["Knot", 33, ""], ["Vertex", 45, ""], ["On curve", 61, "dim"], ["On surface", 74, "dim"], ["On polysurface", 104, "dim"], ["On mesh", 59, "dim"], ["Project", 49, ""], ["SmartTrack", 79, "on"]];
/* label, width, space before divider, space after divider */
const MVIEWS: [string, number, number, number][] = [["Perspective", 94.5, 18.5, 26.5], ["Top", 28.5, 28.5, 26], ["Front", 42, 28, 26], ["Right", 41, 28.5, 26.5], ["Layouts...", 77.5, 28.5, 26]];

function MacApp() {
  return (
    <div className="relative ml-[85.500px] mt-[69px] h-[1372px] w-[1944.500px] shrink-0 rounded-[16px] font-['Inter',sans-serif] leading-none shadow-[0_22px_66px_6px_rgba(0,0,0,0.6)]">
      <div className="flex h-full w-full flex-col overflow-hidden rounded-[16px] bg-[#403634]">
        <div className="relative flex h-[45px] shrink-0 items-center gap-[10.500px] pl-[10px]">
          <span className="h-[20.500px] w-[16.500px] rounded-[50%] bg-[#ff5f57]" />
          <span className="h-[20.500px] w-[16.500px] rounded-[50%] bg-[#ffbd2e]" />
          <span className="h-[20.500px] w-[16.500px] rounded-[50%] bg-[#28c840]" />
          <Fit w={69} className="ml-[846.500px] text-[21px] font-semibold text-[#b9b0ad]">Untitled</Fit>
        </div>
        <div className="flex h-[51px] shrink-0 items-center pb-[9px] pl-[15.500px] text-[20.500px] font-semibold text-[#b3aaa8]">
          <svg viewBox="0 0 27 32" className="h-[32px] w-[27px]"><path d="M1.500 1.500h24v29h-24z" fill="none" stroke="#0a7aff" strokeWidth="2.200" /><path d="M0 0h9v32H0z" fill="#0a7aff" /></svg>
          <Fit w={80} className="ml-[75px]">Grid Snap</Fit>
          <Fit w={46} className="ml-[43.500px]">Ortho</Fit>
          <Fit w={51.5} className="ml-[43.500px]">Planar</Fit>
          <span className="ml-[26.500px] flex h-[25px] w-[124px] items-center justify-center rounded-[6px] bg-[#655b59] text-white"><Fit w={95}>SmartTrack</Fit></span>
          <span className="ml-[11px] flex h-[25px] w-[97.500px] items-center justify-center rounded-[6px] bg-[#655b59] text-white"><Fit w={66.5}>Gumball</Fit></span>
          <Fit w={59} className="ml-[26px]">History</Fit>
          <svg viewBox="0 0 30 37" className="ml-[398px] h-[37px] w-[30px]" fill="none" stroke="#b3aaa8" strokeWidth="1.500">
            <path d="M23 1.500h6v6M1 30v6h6M4 7v3l8 10v14h5V20l8-10V7" /><ellipse cx="14.500" cy="7" rx="10.500" ry="3" />
          </svg>
          <svg viewBox="0 0 28 32" className="ml-[21px] h-[32px] w-[28px]" fill="none" stroke="#8b8280" strokeWidth="1.500"><ellipse cx="12.500" cy="16" rx="11.500" ry="14.500" /><path d="M10 13h5v6h-5z" fill="#b3aaa8" stroke="none" /><path d="M14 16h13" stroke="#b3aaa8" /></svg>
          <svg viewBox="0 0 29 35" className="ml-[14px] h-[35px] w-[29px]" fill="none" stroke="#b3aaa8" strokeWidth="1.500"><ellipse cx="14.500" cy="17.500" rx="13.500" ry="16.500" /><ellipse cx="14.500" cy="17.500" rx="7" ry="8.500" /></svg>
          <span className="ml-[13px] flex h-[29px] w-[261px] items-center rounded-[6px] border-[1.500px] border-[#4c4240] pl-[114px] text-[19px] font-normal"><Fit w={51}>Default</Fit></span>
          <svg viewBox="0 0 27 33" className="ml-[382px] h-[33px] w-[27px]"><path d="M1.500 1.500h24v30h-24z" fill="none" stroke="#bdb3b1" strokeWidth="2" /><path d="M19 0h8v33h-8z" fill="#bdb3b1" /></svg>
        </div>
        <div className="flex h-[28.500px] shrink-0 items-stretch border-t-[1.500px] border-black bg-[#404040] pl-[8px] text-[16px] font-bold text-white">
          {MTABS.map(([s, w, slot], i) => (
            <div key={s} className={"flex shrink-0 items-center justify-center rounded-bl-[4px] border-b-[1.500px] border-l-[1.500px] " + (i === 0 ? "border-b-transparent border-l-[#777] bg-[#303030] text-[#1a84ff]" : "border-[#777]")} style={{ width: slot }}>
              <Fit w={w} className="-mt-[1.500px]">{s}</Fit>
            </div>
          ))}
          <div className="flex-1 rounded-bl-[4px] border-b-[1.500px] border-l-[1.500px] border-[#777]" />
        </div>
        <div className="flex h-[51.500px] shrink-0 items-center border-b-[2.200px] border-black bg-[#303030]">
          <div className="-ml-[1px] flex">
            {BAR.filter((n) => n !== "gear*").map((n) => <MTool key={n} name={n} />)}
          </div>
        </div>
        <div className="flex h-[1151px] shrink-0">
          <div className="flex w-[178px] shrink-0 flex-col overflow-hidden border-r-[2.200px] border-[#1c1614] bg-[#352826]">
            <div className="h-[43.500px] shrink-0 border-b-[1.500px] border-[#4a4544] bg-[#303030]" />
            <div className="ml-[11.500px] mt-[19.500px] flex h-[30px] w-[152px] shrink-0 items-center border-b-[1.500px] border-[#5c514e] bg-[#3e3230] pl-[5px] text-[21px] text-[#6f6563]">
              <Fit w={82.5}>Command</Fit>
            </div>
            <div className="-ml-[.5px] mt-[15px] grid h-[395.500px] shrink-0 grid-cols-[40.560px_40.560px_40.560px_40.560px] content-start overflow-hidden">
              {SIDE.slice(0, 32).map((n) => <MTool key={n} name={n} tall />)}
            </div>
            <div className="h-[1.500px] shrink-0 bg-[#6a6260]" />
            <div className="mt-[8px] flex flex-col pl-[25px] text-[16.500px] font-medium text-[#f0ecea]">
              <div className="flex h-[26px] items-center">
                <span className="flex h-[20px] w-[16px] items-center justify-center rounded-[50%] bg-[#1a78e8]"><span className="h-[8px] w-[6.500px] rounded-[50%] bg-white" /></span>
                <Fit w={71} className="ml-[6.500px]">Persistent</Fit>
              </div>
              <div className="flex h-[26px] items-center">
                <span className="h-[19px] w-[15px] rounded-[50%] bg-[#6c6260]" />
                <Fit w={62} className="ml-[7px]">One shot</Fit>
              </div>
              <div className="mt-[5px] flex flex-col">
                {MSNAPS.map(([s, w, k]) => (
                  <div key={s} className={"flex h-[33.450px] items-center pl-[2px] " + (k === "dim" ? "opacity-35" : "")}>
                    <span className={"flex h-[18px] w-[15px] items-center justify-center rounded-[3.500px] " + (k === "on" ? "bg-[#1a78e8]" : "bg-[#6c6260]")}>
                      {k === "on" && <svg viewBox="0 0 10 12" className="h-[12px] w-[10px]"><path d="M1.500 6.500 4 9.500 8.500 2" fill="none" stroke="#fff" strokeWidth="2" /></svg>}
                    </span>
                    <Fit w={w} className="ml-[6px]">{s}</Fit>
                  </div>
                ))}
              </div>
            </div>
          </div>
          <div className="flex flex-1 flex-col bg-[#303030]">
            <div className="flex h-[44px] shrink-0 items-center border-b-[2.200px] border-[#8a8a8a] pl-[12px] text-[20px] text-[#939393]">
              <svg viewBox="0 0 21 24" className="h-[24px] w-[21px]" fill="none" stroke="#1868c8" strokeWidth="1.500"><path d="M1 1h19v22H1zM10.500 1v22M1 12h19M1 3h4M11 3h4M1 14h4" /></svg>
              <svg viewBox="0 0 21 24" className="ml-[22px] h-[24px] w-[21px]" fill="none" stroke="#6a6a6a" strokeWidth="1.500"><path d="M1 1h19v22H1zM1 2.500h5" /></svg>
              {MVIEWS.map(([s, w, a, b], i) => (
                <React.Fragment key={s}>
                  <span className="h-[23px] w-[1.500px] shrink-0 bg-[#777]" style={{ marginLeft: a }} />
                  <span style={{ width: b }} className="shrink-0" />
                  <Fit w={w} className={i === 0 ? "text-[#1a84f4]" : ""}>{s}</Fit>
                </React.Fragment>
              ))}
            </div>
            <div className="grid grid-cols-[884.500px_877px] grid-rows-[528px_574px] gap-x-[5px] gap-y-[5px] bg-[#d0d0d0]">
              <div className="relative overflow-hidden">
                <PlanView mac w={885} h={528} cx={441.8} cy={264} sx={7.8} sy={9.62} n={10} gx={48} gy={470.5} gw={40} gh={50} labels={["y", "x"]} />
                <MLabel text="Top" w={42} tw={28.5} />
              </div>
              <div className="relative overflow-hidden">
                <PerspView mac w={877} h={528} cx={438.5} cy={264} fx={886} fy={1102} unit={0.67} ext={150} n={10} g={[[50, 428, 50, 460], [50, 460, 83, 473], [50, 460, 70, 443]]} labels={[{ x: 46, y: 426, s: "z" }, { x: 71, y: 444, s: "y" }, { x: 86, y: 478, s: "x" }]} />
                <MLabel text="Perspective" w={108} tw={96} active />
              </div>
              <div className="relative overflow-hidden">
                <PlanView mac w={885} h={574} cx={441.8} cy={287} sx={7.8} sy={9.62} n={10} gx={48} gy={515} gw={40} gh={50} labels={["z", "x"]} />
                <MLabel text="Front" w={53} tw={41} />
              </div>
              <div className="relative overflow-hidden">
                <PlanView mac w={877} h={574} cx={438.5} cy={287} sx={7.8} sy={9.62} n={10} gx={48} gy={515} gw={40} gh={50} labels={["z", "y"]} />
                <MLabel text="Right" w={53} tw={41} />
              </div>
            </div>
          </div>
        </div>
        <div className="flex flex-1 items-center bg-[#333231] pt-[2px] text-[16.500px] font-medium text-[#d8d8d8]">
          <svg viewBox="0 0 18 16" className="ml-[8px] h-[16px] w-[16px]"><path d="M1 2h2M5 2h12M1 8h2M5 8h12M1 14h2M5 14h12" stroke="#a0a0a0" strokeWidth="1.800" /></svg>
          <Fit w={79} className="ml-[1230px]">Millimeters</Fit>
          <span className="ml-[21px] flex h-[27px] w-[94px] items-center rounded-[4px] border-[1.500px] border-[#686868] pl-[9px]">
            <Fit w={48}>CPlane</Fit>
            <svg viewBox="0 0 8 16" className="ml-[18px] h-[16px] w-[8px]"><path d="M1 6l3-4 3 4M1 10l3 4 3-4" fill="none" stroke="#ccc" strokeWidth="1.300" /></svg>
          </span>
          <Fit w={63} className="ml-[22px]">X: 33.119</Fit>
          <Fit w={65} className="ml-[47px]">Y: 20.000</Fit>
          <Fit w={57} className="ml-[50px]">Z: 0.000</Fit>
        </div>
      </div>
      <svg width="1800" height="700" className="absolute -left-[8px] top-[85px]">
        <path fillRule="evenodd" fill="#ff0000" d="M.5 0H1787.500V93.500L186 90.700 188.500 588.700 .5 592zM14.500 13.700V577.700L174 575 172 77 1774 79.500V13.700z" />
      </svg>
    </div>
  );
}

export default function App() {
  return (
    <div className="h-[1406px] w-[4096px] overflow-hidden bg-white">
      <div className="relative flex h-[1511px] w-[4403px] items-start pl-[41px] [zoom:0.9303]">
        <Defs />
        <WinApp />
        <MacApp />
      </div>
    </div>
  );
}
